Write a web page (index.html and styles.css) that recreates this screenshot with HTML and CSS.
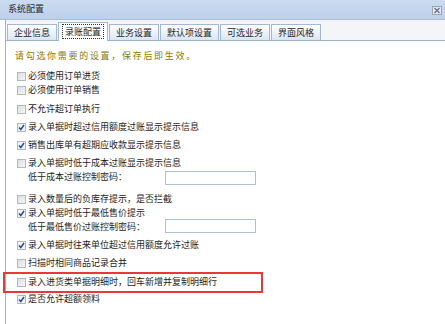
FILE: index.html
```html
<!DOCTYPE html>
<html lang="zh">
<head>
<meta charset="utf-8">
<title>系统配置</title>
<link rel="stylesheet" href="styles.css">
</head>
<body>
<div class="window">
  <div class="titlebar">
    <span class="title">系统配置</span>
    <svg class="close" width="10" height="9" viewBox="0 0 10 9"><rect x="0.5" y="0.5" width="9" height="8" fill="#e4e8ee" stroke="#9aa6b4"/><path d="M2.5 2 L7.5 7 M7.5 2 L2.5 7" stroke="#6b7480" stroke-width="1.4"/></svg>
  </div>
  <div class="panel">
    <div class="tabs">
      <div class="tab">企业信息</div>
      <div class="tab active"><span class="focus">录账配置</span></div>
      <div class="tab">业务设置</div>
      <div class="tab">默认项设置</div>
      <div class="tab">可选业务</div>
      <div class="tab">界面风格</div>
    </div>
    <div class="body">
      <div class="prompt">请勾选你需要的设置，保存后即生效。</div>
      <div class="row r1"><span class="cb"></span>必须使用订单进货</div>
      <div class="row r2"><span class="cb"></span>必须使用订单销售</div>
      <div class="row r3"><span class="cb"></span>不允许超订单执行</div>
      <div class="row"><span class="cb on"></span>录入单据时超过信用额度过账显示提示信息</div>
      <div class="row"><span class="cb on"></span>销售出库单有超期应收款显示提示信息</div>
      <div class="row"><span class="cb"></span>录入单据时低于成本过账显示提示信息</div>
      <div class="sub"><span class="label">低于成本过账控制密码：</span><span class="input"></span></div>
      <div class="row r7"><span class="cb"></span>录入数量后的负库存提示，是否拦截</div>
      <div class="row r8"><span class="cb on"></span>录入单据时低于最低售价提示</div>
      <div class="sub"><span class="label">低于最低售价过账控制密码：</span><span class="input up"></span></div>
      <div class="row"><span class="cb on"></span>录入单据时往来单位超过信用额度允许过账</div>
      <div class="row"><span class="cb"></span>扫描时相同商品记录合并</div>
      <div class="row r11"><span class="cb"></span>录入进货类单据明细时，回车新增并复制明细行</div>
      <div class="row r12"><span class="cb on"></span>是否允许超额领料</div>
    </div>
  </div>
  <div class="highlight"></div>
</div>
</body>
</html>
```

FILE: styles.css
```css
html, body {
  margin: 0;
  padding: 0;
  background: #ffffff;
}
body {
  width: 445px;
  height: 324px;
  overflow: hidden;
  font-family: "Noto Sans CJK SC", "Noto Sans", sans-serif;
  font-size: 9px;
  color: #1e1e1e;
}
.window {
  position: relative;
  width: 445px;
  height: 324px;
}
.titlebar {
  height: 20px;
  background: linear-gradient(#cbdcf1, #bdd0ea);
  border-bottom: 1px solid #a9bdd6;
  display: flex;
  align-items: center;
  justify-content: space-between;
  padding: 0 0 1px 8px;
  box-sizing: border-box;
}
.title {
  font-size: 9px;
  color: #2a2a2a;
  line-height: 12px;
}
.close {
  margin-right: 3px;
  margin-top: 2px;
}
.panel {
  margin-left: 5px;
  border-left: 1px solid #9fb3cc;
  height: 304px;
}
.tabs {
  height: 21px;
  background: #f3f5f9;
  border-bottom: 1px solid #9db2cd;
  display: flex;
  align-items: flex-end;
  gap: 1px;
  padding-left: 1px;
  box-sizing: border-box;
}
.tab {
  height: 16px;
  line-height: 15px;
  padding: 0 6px;
  border: 1px solid #a3b8d3;
  border-bottom: none;
  background: linear-gradient(#ffffff, #dbe5f2);
  color: #1e1e1e;
  white-space: nowrap;
  box-sizing: border-box;
}
.tab.active {
  height: 19px;
  margin-bottom: -1px;
  background: #ffffff;
  padding: 0 3px;
  line-height: 17px;
  position: relative;
}
.focus {
  display: inline-block;
  border: 1px dotted #333;
  padding: 0 2px;
  line-height: 13px;
  margin-top: 1px;
}
.body {
  padding: 9px 0 0 11px;
}
.prompt {
  height: 12px;
  line-height: 12px;
  color: #8a7a06;
  letter-spacing: 1.7px;
  margin-left: -2px;
  white-space: nowrap;
}
.row {
  display: flex;
  align-items: center;
  height: 12px;
  line-height: 12px;
  margin-top: 6px;
  white-space: nowrap;
}
.row.r1 { margin-top: 8px; }
.row.r2 { margin-top: 2px; }
.row.r3 { margin-top: 7px; }
.row.r7 { margin-top: 10px; }
.row.r8 { margin-top: 2px; }
.row.r11 { margin-top: 7px; }
.row.r12 { margin-top: 5px; }
.cb {
  display: inline-block;
  width: 9px;
  height: 9px;
  border: 1px solid #b4b8bd;
  background: linear-gradient(135deg, #dcdfe3, #f4f5f6);
  box-sizing: border-box;
  margin-right: 2px;
  flex: none;
}
.cb.on {
  background-color: #f0f3f7;
  background-image: url("data:image/svg+xml;utf8,<svg xmlns='http://www.w3.org/2000/svg' width='7' height='7' viewBox='0 0 7 7'><path d='M1 3.5 L2.8 5.5 L6 1' fill='none' stroke='%23214f9c' stroke-width='1.5'/></svg>");
  background-repeat: no-repeat;
  background-position: center;
}
.sub {
  display: flex;
  align-items: center;
  height: 12px;
  line-height: 12px;
  margin-top: 2px;
  padding-left: 11px;
  white-space: nowrap;
}
.label {
  width: 137px;
  flex: none;
}
.input {
  width: 89px;
  height: 12px;
  border: 1px solid #aec0d6;
  background: #ffffff;
  flex: none;
  margin-top: 1px;
}
.input.up {
  margin-top: -3px;
}
.highlight {
  position: absolute;
  left: 3px;
  top: 272px;
  width: 260px;
  height: 21px;
  border: 2px solid #e8383a;
  box-sizing: border-box;
}
```
